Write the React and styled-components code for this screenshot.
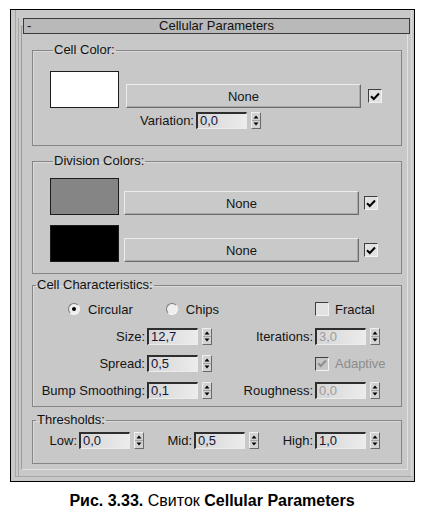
import React from "react";
import styled, { createGlobalStyle } from "styled-components";

const GlobalStyle = createGlobalStyle`
  html, body {
    margin: 0;
    padding: 0;
    background: #ffffff;
  }
  body {
    font-family: "Liberation Sans", Arial, sans-serif;
  }
`;

const Page = styled.div`
  width: 424px;
  height: 518px;
  box-sizing: border-box;
  padding-top: 9px;
`;

const Frame = styled.div`
  margin-left: 10px;
  width: 405px;
  height: 473px;
  box-sizing: border-box;
  border: 1px solid #000;
  background: #c8c8c8;
  padding: 0 2px 4px 4px;
  display: flex;
  font-size: 13px;
  color: #141414;
`;

const Well = styled.div`
  flex: 1;
  display: flex;
  border: 1px solid #a6a6a6;
  border-top: none;
  border-right-color: #dcdcdc;
  padding: 8px 0 0 2px;
`;

const Rollout = styled.div`
  flex: 1;
  display: flex;
  flex-direction: column;
  border-left: 1px solid #a6a6a6;
`;

const TitleBar = styled.div`
  position: relative;
  z-index: 1;
  height: 16px;
  margin: 0 1px 0 4px;
  box-sizing: border-box;
  border: 1px solid #3a3a3a;
  background: #b9b9b9;
  display: grid;
  grid-template-columns: 16px 1fr 16px;
  align-items: center;
  line-height: 14px;
`;

const Minus = styled.span`
  padding-left: 3px;
`;

const Title = styled.span`
  text-align: center;
  color: #111;
`;

const Body = styled.div`
  flex: 1;
  margin: -8px 3px 6px 2px;
  border: 1px solid;
  border-color: #9c9c9c #e0e0e0 #e0e0e0 #9c9c9c;
  padding: 16px 5px 0 10px;
  display: flex;
  flex-direction: column;
`;

const Group = styled.fieldset`
  margin: ${p => p.$top || 0}px 0 0;
  padding: ${p => p.$pad};
  min-width: 0;
  border: 1px solid #858585;
  box-shadow: inset 1px 1px 0 #dadada;
  display: flex;
  flex-direction: column;
`;

const Legend = styled.legend`
  margin-left: 3px;
  padding: 0 1px;
  line-height: 14px;
  font-size: 13px;
  color: #111;
`;

const ColorRow = styled.div`
  display: flex;
  align-items: flex-end;
  gap: ${p => p.$gap}px;
  margin-top: ${p => p.$top}px;
`;

const Swatch = styled.span`
  width: 69px;
  height: 37px;
  box-sizing: border-box;
  border: 1px solid #1c1c1c;
  background: ${p => p.$color};
  flex: none;
`;

const ButtonWrap = styled.div`
  display: flex;
  align-items: center;
  gap: ${p => p.$gap}px;
`;

const MapButton = styled.div`
  width: 235px;
  height: 24px;
  box-sizing: border-box;
  border: 1px solid;
  border-color: #ececec #6c6c6c #6c6c6c #ececec;
  box-shadow: inset -1px -1px 0 #a9a9a9;
  background: #c9c9c9;
  display: flex;
  align-items: center;
  justify-content: center;
  color: #161616;
`;

const Box = styled.span`
  width: 14px;
  height: 14px;
  box-sizing: border-box;
  border: 1px solid;
  border-color: #3e3e3e #f2f2f2 #f2f2f2 #3e3e3e;
  background: ${p => (p.$disabled ? "#c6c6c6" : "#e2e2e2")};
  display: inline-flex;
  align-items: center;
  justify-content: center;
  flex: none;
`;

const RadioDot = styled.span`
  width: 12px;
  height: 12px;
  box-sizing: border-box;
  border-radius: 50%;
  border: 1px solid;
  border-color: #7a7a7a #f6f6f6 #f6f6f6 #7a7a7a;
  background: #eeeeee;
  display: inline-flex;
  align-items: center;
  justify-content: center;
  flex: none;

  &::after {
    content: "";
    width: 4px;
    height: 4px;
    border-radius: 50%;
    background: ${p => (p.$on ? "#000" : "transparent")};
  }
`;

const Option = styled.span`
  display: inline-flex;
  align-items: center;
  gap: ${p => p.$gap || 7}px;
  margin-left: ${p => p.$left || 0}px;
  color: ${p => (p.$disabled ? "#8c8c8c" : "#141414")};
  white-space: nowrap;
`;

const SpinRow = styled.div`
  display: flex;
  align-items: center;
  height: 17px;
  margin: ${p => p.$margin || 0};
`;

const Label = styled.span`
  width: ${p => p.$w}px;
  margin-right: 2px;
  text-align: right;
  white-space: nowrap;
  flex: none;
`;

const Field = styled.span`
  width: 51px;
  height: 17px;
  box-sizing: border-box;
  border-style: solid;
  border-width: 2px 1px 1px 2px;
  border-color: #2e2e2e #ececec #ececec #2e2e2e;
  background: linear-gradient(to right, #d6d6d6, #ececec);
  color: ${p => (p.$disabled ? "#9c9c9c" : "#14143a")};
  padding-left: 2px;
  line-height: 14px;
  flex: none;
`;

const SpinBox = styled.span`
  width: 10px;
  height: 17px;
  margin-left: 4px;
  box-sizing: border-box;
  border: 1px solid;
  border-color: #f0f0f0 #6a6a6a #6a6a6a #f0f0f0;
  background: #d2d2d2;
  display: flex;
  flex: none;
`;

const CharGrid = styled.div`
  display: grid;
  grid-template-columns: 181px 1fr;
  grid-template-rows: 18px 17px 17px 17px;
  row-gap: 10px;
  margin-top: 8px;
  align-items: center;
`;

const Cell = styled.div`
  display: flex;
  align-items: center;
  padding-left: ${p => p.$left || 0}px;
`;

const ThreshRow = styled.div`
  display: flex;
  margin-top: 5px;
`;

const Caption = styled.p`
  margin: 9px 0 0;
  width: 424px;
  text-align: center;
  font-size: 16px;
  line-height: 20px;
  color: #000;
`;

function Spinner() {
  return (
    <SpinBox>
      <svg width="8" height="15" viewBox="0 0 8 15">
        <path d="M0 7.5 H8" stroke="#a4a4a4" strokeWidth="1" />
        <polygon points="1.5,5.5 6.5,5.5 4,2.5" fill="#000" />
        <polygon points="1.5,9.5 6.5,9.5 4,12.5" fill="#000" />
      </svg>
    </SpinBox>
  );
}

function CheckBox({ checked, disabled }) {
  return (
    <Box $disabled={disabled}>
      {checked && (
        <svg width="10" height="9" viewBox="0 0 10 9">
          <path
            d="M1 4.2 L3.8 7 L9 1.5"
            fill="none"
            stroke={disabled ? "#8e8e8e" : "#000"}
            strokeWidth="2"
          />
        </svg>
      )}
    </Box>
  );
}

function Spin({ label, labelW, value, disabled, margin }) {
  return (
    <SpinRow $margin={margin}>
      <Label $w={labelW}>{label}</Label>
      <Field $disabled={disabled}>{value}</Field>
      <Spinner />
    </SpinRow>
  );
}

function ColorLine({ color, gap, top }) {
  return (
    <ColorRow $gap={gap} $top={top}>
      <Swatch $color={color} />
      <ButtonWrap $gap={gap}>
        <MapButton>None</MapButton>
        <CheckBox checked />
      </ButtonWrap>
    </ColorRow>
  );
}

export default function App() {
  return (
    <Page>
      <GlobalStyle />
      <Frame>
        <Well>
          <Rollout>
            <TitleBar>
              <Minus>-</Minus>
              <Title>Cellular Parameters</Title>
              <span />
            </TitleBar>
            <Body>
              <Group $pad="0 0 16px 17px">
                <Legend>Cell Color:</Legend>
                <ColorLine color="#ffffff" gap={7} top={14} />
                <Spin label="Variation:" labelW={144} value="0,0" margin="4px 0 0" />
              </Group>

              <Group $top={8} $pad="0 0 11px 17px">
                <Legend>Division Colors:</Legend>
                <ColorLine color="#858585" gap={5} top={10} />
                <ColorLine color="#000000" gap={5} top={10} />
              </Group>

              <Group $top={4} $pad="0 0 7px 0">
                <Legend>Cell Characteristics:</Legend>
                <CharGrid>
                  <Cell $left={35}>
                    <Option $gap={8}>
                      <RadioDot $on />
                      Circular
                    </Option>
                    <Option $gap={8} $left={33}>
                      <RadioDot />
                      Chips
                    </Option>
                  </Cell>
                  <Cell $left={101}>
                    <Option $gap={6}>
                      <CheckBox />
                      Fractal
                    </Option>
                  </Cell>

                  <Spin label="Size:" labelW={112} value="12,7" />
                  <Spin label="Iterations:" labelW={99} value="3,0" disabled />

                  <Spin label="Spread:" labelW={112} value="0,5" />
                  <Cell $left={101}>
                    <Option $gap={6} $disabled>
                      <CheckBox checked disabled />
                      Adaptive
                    </Option>
                  </Cell>

                  <Spin label="Bump Smoothing:" labelW={112} value="0,1" />
                  <Spin label="Roughness:" labelW={99} value="0,0" disabled />
                </CharGrid>
              </Group>

              <Group $top={6} $pad="0 0 14px 0">
                <Legend>Thresholds:</Legend>
                <ThreshRow>
                  <Spin label="Low:" labelW={44} value="0,0" />
                  <Spin label="Mid:" labelW={48} value="0,5" />
                  <Spin label="High:" labelW={54} value="1,0" />
                </ThreshRow>
              </Group>
            </Body>
          </Rollout>
        </Well>
      </Frame>
      <Caption>
        <b>Рис. 3.33.</b> Свиток <b>Cellular Parameters</b>
      </Caption>
    </Page>
  );
}
